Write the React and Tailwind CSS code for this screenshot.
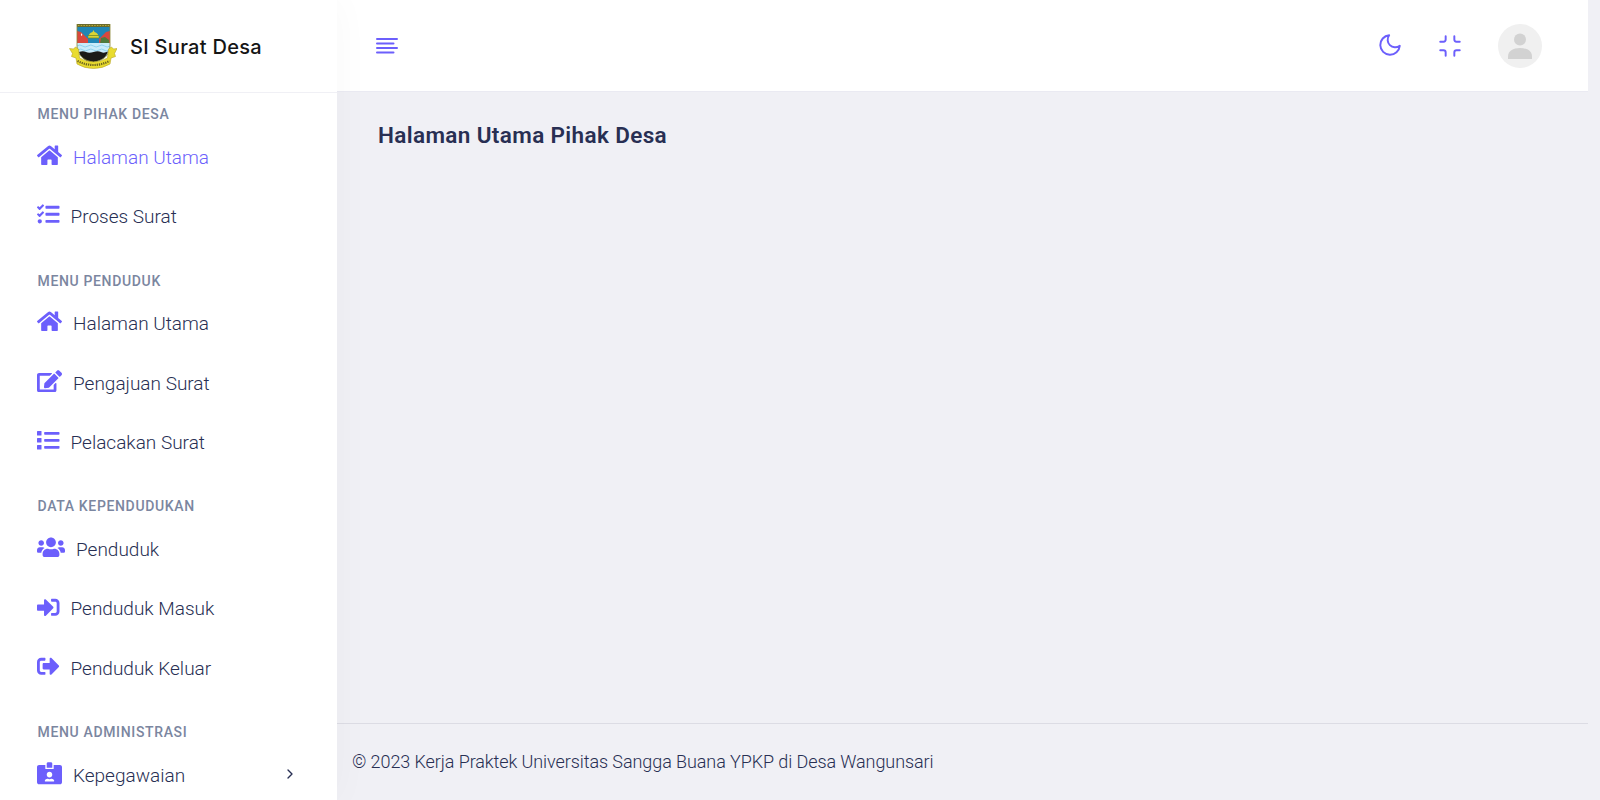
import { FaHome, FaTasks, FaEdit, FaUsers, FaSignInAlt, FaSignOutAlt, FaIdCardAlt } from "react-icons/fa";
import { FiMoon, FiMinimize, FiChevronRight } from "react-icons/fi";

function ListIcon({ className }) {
  return (
    <svg viewBox="0 0 22 22" className={className} fill="currentColor">
      <rect x="0" y="2" width="4.400" height="4.400" rx="0.500" />
      <rect x="0" y="8.800" width="4.400" height="4.400" rx="0.500" />
      <rect x="0" y="15.600" width="4.400" height="4.400" rx="0.500" />
      <rect x="7" y="2.900" width="15" height="2.700" rx="0.700" />
      <rect x="7" y="9.700" width="15" height="2.700" rx="0.700" />
      <rect x="7" y="16.500" width="15" height="2.700" rx="0.700" />
    </svg>
  );
}

const sections = [
  {
    title: "MENU PIHAK DESA",
    items: [
      { label: "Halaman Utama", Icon: FaHome, size: "w-[25px]", active: true },
      { label: "Proses Surat", Icon: FaTasks, size: "w-[22.5px]" },
    ],
  },
  {
    title: "MENU PENDUDUK",
    items: [
      { label: "Halaman Utama", Icon: FaHome, size: "w-[25px]" },
      { label: "Pengajuan Surat", Icon: FaEdit, size: "w-[25px]" },
      { label: "Pelacakan Surat", Icon: ListIcon, size: "w-[22.5px]" },
    ],
  },
  {
    title: "DATA KEPENDUDUKAN",
    items: [
      { label: "Penduduk", Icon: FaUsers, size: "w-[28px]" },
      { label: "Penduduk Masuk", Icon: FaSignInAlt, size: "w-[22.5px]" },
      { label: "Penduduk Keluar", Icon: FaSignOutAlt, size: "w-[22.5px]" },
    ],
  },
  {
    title: "MENU ADMINISTRASI",
    items: [{ label: "Kepegawaian", Icon: FaIdCardAlt, size: "w-[25px]", more: true }],
  },
];

function Emblem() {
  return (
    <svg viewBox="0 0 48 46" className="h-[46px] w-12 shrink-0">
      <path d="M8 1h33v22c0 9-7 15-16.500 16C15 38 8 32 8 23z" fill="#1f86b5" />
      <path d="M8 8l4 1 7 7v5H8zM41 8l-4 1-7 7v5h11z" fill="#d9473d" />
      <path d="M32 15l4-1 4 3v4h-9z" fill="#4e7a3c" />
      <path d="M12 10l1.500 2-1.500 1z" fill="#fff" />
      <path d="M8 20h33v4c0 8-7 14-16.500 15C15 38 8 32 8 24z" fill="#c9ebfa" />
      <path d="M8 23q3-2 5.500 0t5.500 0 5.500 0 5.500 0 5.500 0 5.500 0M9 27q3-2 5 0t5 0 5.500 0 5.500 0 5 0 5 0" fill="none" stroke="#8fd2ee" strokeWidth="1" />
      <path d="M10 29q4-1.500 7 0t7.500 0 7.500 0 7-.5c-2 6-7 9.500-14.500 10.500C17 39 12 35 10 29z" fill="#1b1b18" />
      <path d="M19 15q.5-5 4.500-6l1-2 1 2q4 1 4.500 6z" fill="#dcd433" />
      <path d="M18 12.500h13M19 15h11" stroke="#6f8c2c" strokeWidth=".8" />
      <path d="M8 1h33v3H8z" fill="#6b6a2a" />
      <path d="M9 2.500h31" stroke="#b8ad3a" strokeWidth="1" strokeDasharray="1.500 1.200" />
      <path d="M8 1v22c0 9 7 15 16.500 16C34 38 41 32 41 23V1" fill="none" stroke="#8b8733" strokeWidth=".8" />
      <path d="M.5 25.500l4 .5 2-2 3 2 1 9q14 8 28 0l1-9 3-2 2 2 3.500-.5-2.500 5 1 3-4.500 1.500-1 6q-7.500 4.500-16.500 4.500T8 41l-1-6-4.500-1.500 1-3z" fill="#e9dc2f" stroke="#b7a526" strokeWidth=".6" />
      <path d="M8.500 38q16 8 32 0" fill="none" stroke="#6d6420" strokeWidth="2.200" strokeDasharray="1.300 .9" />
    </svg>
  );
}

function Sidebar() {
  return (
    <aside className="relative z-10 flex w-[337px] shrink-0 flex-col overflow-hidden bg-white shadow-[0_0_37px_rgba(8,21,66,0.03)]">
      <div className="flex h-[93px] shrink-0 items-center border-b border-[#f0f0f5] pl-[69px]">
        <Emblem />
        <span className="mt-px ml-[13px] font-['Inter',sans-serif] text-[20px] font-medium tracking-[0.3px] text-[#151515]">SI Surat Desa</span>
      </div>
      {sections.map((section) => (
        <section key={section.title} className="shrink-0 pt-[11px] pb-[13px]">
          <h6 className="mb-1 pl-[37.5px] text-[14px] leading-5 font-medium tracking-[0.65px] text-[#7b86a0]">{section.title}</h6>
          <ul>
            {section.items.map(({ label, Icon, size, active, more }) => (
              <li key={label} className="flex h-[59.3px] items-center pr-[39px] pl-[37px]">
                <span className="pb-[5px] text-[#6c5ffc]">
                  <Icon className={`h-[22.5px] ${size}`} />
                </span>
                <span className={`ml-[11px] text-[19px] leading-6 font-[350] ${active ? "text-[#6c5ffc]" : "text-[#282f53]"}`}>
                  {label}
                </span>
                {more && <FiChevronRight className="mb-[5px] ml-auto size-4 text-[#282f53]" />}
              </li>
            ))}
          </ul>
        </section>
      ))}
    </aside>
  );
}

function Header() {
  return (
    <header className="flex h-[92px] shrink-0 items-center border-b border-[#eaeaf2] bg-white pr-[46px] pl-[39px] text-[#6c5ffc]">
      <svg viewBox="0 0 22 16" className="h-4 w-[22px]" fill="none" stroke="currentColor" strokeWidth="2" strokeLinecap="round">
        <path d="M1 1h20M1 5.500h16.500M1 10h20M1 14.500h16.500" />
      </svg>
      <FiMoon className="mb-[2px] ml-auto size-[26px]" strokeWidth={1.8} />
      <FiMinimize className="mt-px ml-[34px] size-[26px]" strokeWidth={1.8} />
      <svg viewBox="0 0 44 44" className="ml-[35px] size-11">
        <circle cx="22" cy="22" r="22" fill="#f0f0f0" />
        <circle cx="22" cy="15.500" r="6" fill="#d2d2d2" />
        <path d="M10 35v-2.500C10 27 15 24 22 24s12 3 12 8.500V35z" fill="#d2d2d2" />
      </svg>
    </header>
  );
}

export default function App() {
  return (
    <div className="flex h-[800px] w-[1600px] overflow-hidden bg-[#f0f0f5] font-['Roboto',sans-serif]">
      <Sidebar />
      <div className="mr-3 flex min-w-0 flex-1 flex-col">
        <Header />
        <main className="flex-1 pt-[27px] pl-[41px]">
          <h1 className="text-[22.5px] leading-8 font-semibold tracking-[0.37px] text-[#282f53]">Halaman Utama Pihak Desa</h1>
        </main>
        <footer className="flex h-[77px] items-center border-t border-[#dcdce4] pl-[15px]">
          <p className="text-[18px] leading-6 font-[350] tracking-[-0.085px] text-[#282f53]">
            © 2023 Kerja Praktek Universitas Sangga Buana YPKP di Desa Wangunsari
          </p>
        </footer>
      </div>
    </div>
  );
}
